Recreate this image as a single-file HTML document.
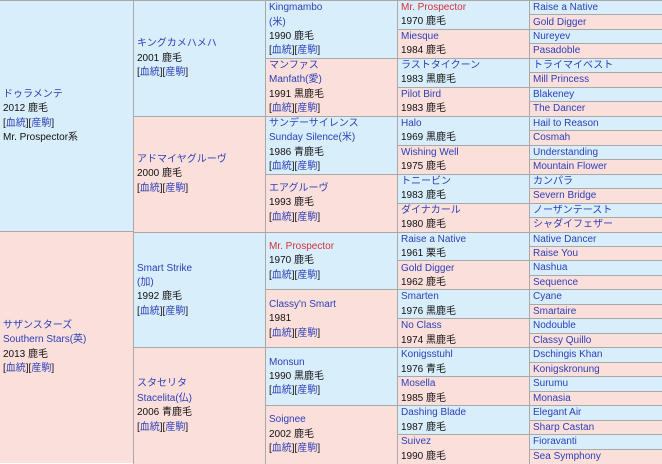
<!DOCTYPE html>
<html><head><meta charset="utf-8"><style>
body{margin:0;width:662px;height:463px;overflow:hidden;background:#fff;font-family:"Liberation Sans","Noto Sans CJK JP",sans-serif;font-size:10px;color:#111}
.c{position:absolute;box-sizing:border-box;border-left:1px solid #a8a8a8;border-top:1px solid #a8a8a8;display:flex;flex-direction:column;justify-content:center;padding-left:3px;line-height:14.4px;white-space:nowrap;overflow:hidden}
.b{background:#d9eefb}.p{background:#fbdfdb}
.l{color:#2b3fb8}.r{color:#d4303a}
.c1{left:0;width:134px;border-left:none}.c2{left:133px;width:133px}.c3{left:265px;width:133px}.c4{left:397px;width:133px}.c5{left:529px;width:133px}
</style></head><body>
<div class="c c1 b" style="top:0;height:232px"><span class="l">ドゥラメンテ</span><span>2012 鹿毛</span><span>[<span class="l">血統</span>][<span class="l">産駒</span>]</span><span>Mr. Prospector系</span></div>
<div class="c c1 p" style="top:231px;height:232px"><span class="l">サザンスターズ</span><span class="l">Southern Stars(英)</span><span>2013 鹿毛</span><span>[<span class="l">血統</span>][<span class="l">産駒</span>]</span></div>

<div class="c c2 b" style="top:0;height:116.75px"><span class="l">キングカメハメハ</span><span>2001 鹿毛</span><span>[<span class="l">血統</span>][<span class="l">産駒</span>]</span></div>
<div class="c c2 p" style="top:115.75px;height:116.75px"><span class="l">アドマイヤグルーヴ</span><span>2000 鹿毛</span><span>[<span class="l">血統</span>][<span class="l">産駒</span>]</span></div>
<div class="c c2 b" style="top:231.5px;height:116.75px"><span class="l">Smart Strike</span><span class="l">(加)</span><span>1992 鹿毛</span><span>[<span class="l">血統</span>][<span class="l">産駒</span>]</span></div>
<div class="c c2 p" style="top:347.25px;height:116.75px"><span class="l">スタセリタ</span><span class="l">Stacelita(仏)</span><span>2006 青鹿毛</span><span>[<span class="l">血統</span>][<span class="l">産駒</span>]</span></div>

<div class="c c3 b" style="top:0;height:58.9px"><span class="l">Kingmambo</span><span class="l">(米)</span><span>1990 鹿毛</span><span>[<span class="l">血統</span>][<span class="l">産駒</span>]</span></div>
<div class="c c3 p" style="top:57.9px;height:58.9px"><span class="l">マンファス</span><span class="l">Manfath(愛)</span><span>1991 黒鹿毛</span><span>[<span class="l">血統</span>][<span class="l">産駒</span>]</span></div>
<div class="c c3 b" style="top:115.75px;height:58.9px"><span class="l">サンデーサイレンス</span><span class="l">Sunday Silence(米)</span><span>1986 青鹿毛</span><span>[<span class="l">血統</span>][<span class="l">産駒</span>]</span></div>
<div class="c c3 p" style="top:173.6px;height:58.9px"><span class="l">エアグルーヴ</span><span>1993 鹿毛</span><span>[<span class="l">血統</span>][<span class="l">産駒</span>]</span></div>
<div class="c c3 b" style="top:231.5px;height:58.9px"><span class="r">Mr. Prospector</span><span>1970 鹿毛</span><span>[<span class="l">血統</span>][<span class="l">産駒</span>]</span></div>
<div class="c c3 p" style="top:289.4px;height:58.9px"><span class="l">Classy'n Smart</span><span>1981</span><span>[<span class="l">血統</span>][<span class="l">産駒</span>]</span></div>
<div class="c c3 b" style="top:347.25px;height:58.9px"><span class="l">Monsun</span><span>1990 黒鹿毛</span><span>[<span class="l">血統</span>][<span class="l">産駒</span>]</span></div>
<div class="c c3 p" style="top:405.1px;height:58.9px"><span class="l">Soignee</span><span>2002 鹿毛</span><span>[<span class="l">血統</span>][<span class="l">産駒</span>]</span></div>

<div class="c c4 b" style="top:0px;height:29.94px"><span class="r">Mr. Prospector</span><span>1970 鹿毛</span></div>
<div class="c c4 p" style="top:28.94px;height:29.94px"><span class="l">Miesque</span><span>1984 鹿毛</span></div>
<div class="c c4 b" style="top:57.88px;height:29.94px"><span class="l">ラストタイクーン</span><span>1983 黒鹿毛</span></div>
<div class="c c4 p" style="top:86.81px;height:29.94px"><span class="l">Pilot Bird</span><span>1983 鹿毛</span></div>
<div class="c c4 b" style="top:115.75px;height:29.94px"><span class="l">Halo</span><span>1969 黒鹿毛</span></div>
<div class="c c4 p" style="top:144.69px;height:29.94px"><span class="l">Wishing Well</span><span>1975 鹿毛</span></div>
<div class="c c4 b" style="top:173.63px;height:29.94px"><span class="l">トニービン</span><span>1983 鹿毛</span></div>
<div class="c c4 p" style="top:202.56px;height:29.94px"><span class="l">ダイナカール</span><span>1980 鹿毛</span></div>
<div class="c c4 b" style="top:231.5px;height:29.94px"><span class="l">Raise a Native</span><span>1961 栗毛</span></div>
<div class="c c4 p" style="top:260.44px;height:29.94px"><span class="l">Gold Digger</span><span>1962 鹿毛</span></div>
<div class="c c4 b" style="top:289.38px;height:29.94px"><span class="l">Smarten</span><span>1976 黒鹿毛</span></div>
<div class="c c4 p" style="top:318.31px;height:29.94px"><span class="l">No Class</span><span>1974 黒鹿毛</span></div>
<div class="c c4 b" style="top:347.25px;height:29.94px"><span class="l">Konigsstuhl</span><span>1976 青毛</span></div>
<div class="c c4 p" style="top:376.19px;height:29.94px"><span class="l">Mosella</span><span>1985 鹿毛</span></div>
<div class="c c4 b" style="top:405.13px;height:29.94px"><span class="l">Dashing Blade</span><span>1987 鹿毛</span></div>
<div class="c c4 p" style="top:434.06px;height:29.94px"><span class="l">Suivez</span><span>1990 鹿毛</span></div>

<div class="c c5 b" style="top:0px;height:15.47px"><span class="l">Raise a Native</span></div>
<div class="c c5 p" style="top:14.47px;height:15.47px"><span class="l">Gold Digger</span></div>
<div class="c c5 b" style="top:28.94px;height:15.47px"><span class="l">Nureyev</span></div>
<div class="c c5 p" style="top:43.41px;height:15.47px"><span class="l">Pasadoble</span></div>
<div class="c c5 b" style="top:57.88px;height:15.47px"><span class="l">トライマイベスト</span></div>
<div class="c c5 p" style="top:72.34px;height:15.47px"><span class="l">Mill Princess</span></div>
<div class="c c5 b" style="top:86.81px;height:15.47px"><span class="l">Blakeney</span></div>
<div class="c c5 p" style="top:101.28px;height:15.47px"><span class="l">The Dancer</span></div>
<div class="c c5 b" style="top:115.75px;height:15.47px"><span class="l">Hail to Reason</span></div>
<div class="c c5 p" style="top:130.22px;height:15.47px"><span class="l">Cosmah</span></div>
<div class="c c5 b" style="top:144.69px;height:15.47px"><span class="l">Understanding</span></div>
<div class="c c5 p" style="top:159.16px;height:15.47px"><span class="l">Mountain Flower</span></div>
<div class="c c5 b" style="top:173.63px;height:15.47px"><span class="l">カンパラ</span></div>
<div class="c c5 p" style="top:188.09px;height:15.47px"><span class="l">Severn Bridge</span></div>
<div class="c c5 b" style="top:202.56px;height:15.47px"><span class="l">ノーザンテースト</span></div>
<div class="c c5 p" style="top:217.03px;height:15.47px"><span class="l">シャダイフェザー</span></div>
<div class="c c5 b" style="top:231.5px;height:15.47px"><span class="l">Native Dancer</span></div>
<div class="c c5 p" style="top:245.97px;height:15.47px"><span class="l">Raise You</span></div>
<div class="c c5 b" style="top:260.44px;height:15.47px"><span class="l">Nashua</span></div>
<div class="c c5 p" style="top:274.91px;height:15.47px"><span class="l">Sequence</span></div>
<div class="c c5 b" style="top:289.38px;height:15.47px"><span class="l">Cyane</span></div>
<div class="c c5 p" style="top:303.84px;height:15.47px"><span class="l">Smartaire</span></div>
<div class="c c5 b" style="top:318.31px;height:15.47px"><span class="l">Nodouble</span></div>
<div class="c c5 p" style="top:332.78px;height:15.47px"><span class="l">Classy Quillo</span></div>
<div class="c c5 b" style="top:347.25px;height:15.47px"><span class="l">Dschingis Khan</span></div>
<div class="c c5 p" style="top:361.72px;height:15.47px"><span class="l">Konigskronung</span></div>
<div class="c c5 b" style="top:376.19px;height:15.47px"><span class="l">Surumu</span></div>
<div class="c c5 p" style="top:390.66px;height:15.47px"><span class="l">Monasia</span></div>
<div class="c c5 b" style="top:405.13px;height:15.47px"><span class="l">Elegant Air</span></div>
<div class="c c5 p" style="top:419.59px;height:15.47px"><span class="l">Sharp Castan</span></div>
<div class="c c5 b" style="top:434.06px;height:15.47px"><span class="l">Fioravanti</span></div>
<div class="c c5 p" style="top:448.53px;height:15.47px"><span class="l">Sea Symphony</span></div>
</body></html>
